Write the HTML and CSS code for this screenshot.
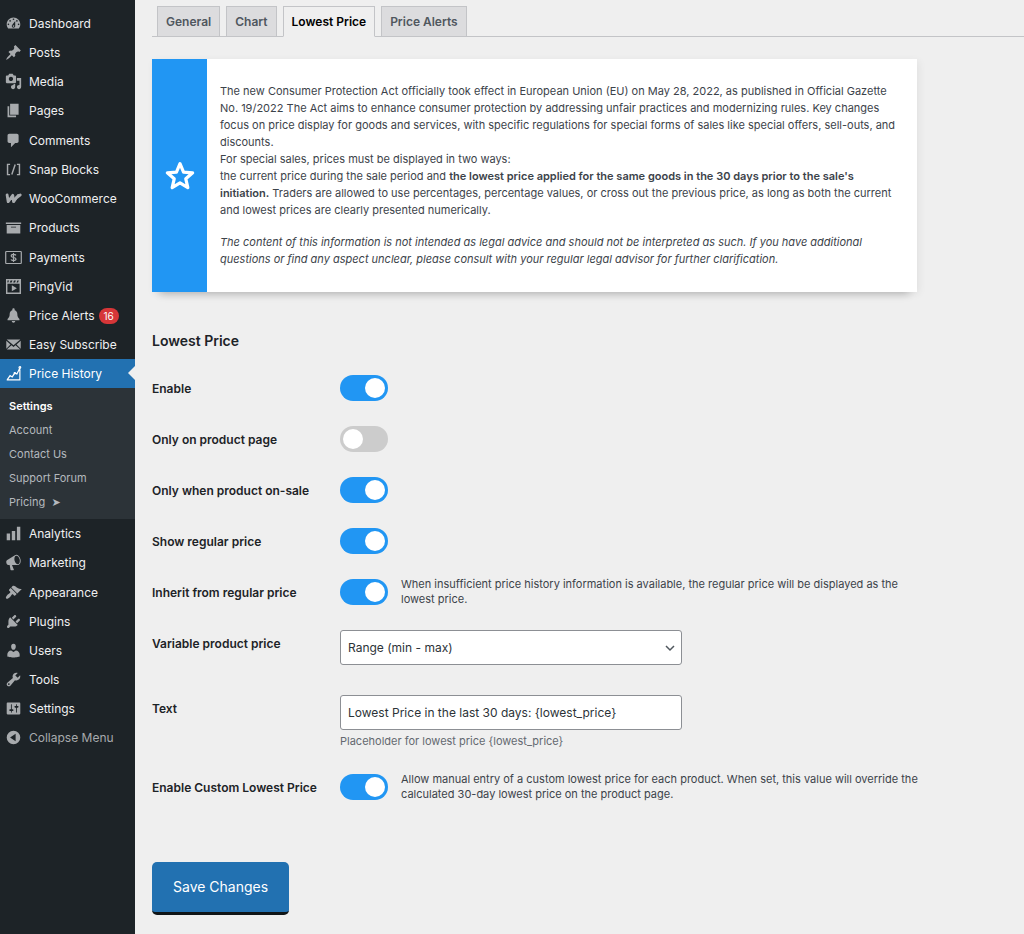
FILE: index.html
```html
<!DOCTYPE html>
<html lang="en">
<head>
  <meta charset="UTF-8">
  <meta name="viewport" content="width=device-width, initial-scale=1.0">
  <title>Price History - Lowest Price</title>
  <link rel="stylesheet" href="styles.css">
</head>
<body>
  <div class="layout">
    <nav class="sidebar" aria-label="Main menu">
      <ul class="menu">
        <li><a href="#"><svg class="icon" viewBox="0 0 20 20"><path fill-rule="evenodd" d="M3.76 16h12.48c1.1-1.37 1.76-3.11 1.76-5 0-4.42-3.58-8-8-8s-8 3.58-8 8c0 1.89.66 3.63 1.76 5zM10 4c.55 0 1 .45 1 1s-.45 1-1 1-1-.45-1-1 .45-1 1-1zM6 6c.55 0 1 .45 1 1s-.45 1-1 1-1-.45-1-1 .45-1 1-1zm8 0c.55 0 1 .45 1 1s-.45 1-1 1-1-.45-1-1 .45-1 1-1zm-5.37 5.55L12 7v6c0 1.1-.9 2-2 2s-2-.9-2-2c0-.57.24-1.08.63-1.45zM4 10c.55 0 1 .45 1 1s-.45 1-1 1-1-.45-1-1 .45-1 1-1zm12 0c.55 0 1 .45 1 1s-.45 1-1 1-1-.45-1-1 .45-1 1-1zm-5 3c0-.55-.45-1-1-1s-1 .45-1 1 .45 1 1 1 1-.45 1-1z"/></svg>Dashboard</a></li>
        <li><a href="#"><svg class="icon" viewBox="0 0 20 20"><path d="M10.44 3.02l1.82-1.82 6.36 6.35-1.83 1.82c-1.05-.68-2.48-.57-3.41.36l-.75.75c-.92.93-1.04 2.35-.35 3.41l-1.83 1.82-2.41-2.41-2.8 2.79c-.42.42-3.38 2.71-3.8 2.29s1.86-3.39 2.28-3.81l2.79-2.79L4.1 9.36l1.83-1.82c1.05.69 2.48.57 3.4-.36l.75-.75c.93-.92 1.05-2.35.36-3.41z"/></svg>Posts</a></li>
        <li><a href="#"><svg class="icon" viewBox="0 0 20 20"><path fill-rule="evenodd" d="M13 11V4c0-.55-.45-1-1-1h-1.67L9 1H5L3.67 3H2c-.55 0-1 .45-1 1v7c0 .55.45 1 1 1h10c.55 0 1-.45 1-1zM7 4.5c1.38 0 2.5 1.12 2.5 2.5S8.38 9.5 7 9.5 4.5 8.38 4.5 7 5.62 4.5 7 4.5zM14 6h5v10.5c0 1.38-1.12 2.5-2.5 2.5S14 17.88 14 16.5s1.12-2.5 2.5-2.5c.17 0 .34.02.5.05V9h-3V6zm-4 8.05V13h2v3.5c0 1.38-1.12 2.5-2.5 2.5S7 17.88 7 16.5 8.12 14 9.5 14c.17 0 .34.02.5.05z"/></svg>Media</a></li>
        <li><a href="#"><svg class="icon" viewBox="0 0 20 20"><path d="M6 15V2h10v13H6zm-1 1h8v2H3V5h2v11z"/></svg>Pages</a></li>
      </ul>
      <ul class="menu">
        <li><a href="#"><svg class="icon" viewBox="0 0 20 20"><path d="M5 2h9c1.1 0 2 .9 2 2v7c0 1.1-.9 2-2 2h-2l-5 5v-5H5c-1.1 0-2-.9-2-2V4c0-1.1.9-2 2-2z"/></svg>Comments</a></li>
        <li><a href="#"><svg class="icon icon-line" viewBox="0 0 20 20"><path d="M6 4H3v12h3M14 4h3v12h-3M12 4L8 16"/></svg>Snap Blocks</a></li>
        <li><a href="#"><svg class="icon" viewBox="0 0 24 20"><path fill="none" stroke="currentColor" stroke-width="4" stroke-linejoin="round" stroke-linecap="round" d="M3 5l1.500 9.500L11 5.500l1 9C14 11 17 7.500 21.500 5"/><path d="M13 16l8.500-12-3.500-.5-6 7z"/></svg>WooCommerce</a></li>
        <li><a href="#"><svg class="icon" viewBox="0 0 20 20"><path fill-rule="evenodd" d="M19 4v2H1V4h18zM2 7h16v10H2V7zm11 3V9H7v1h6z"/></svg>Products</a></li>
      </ul>
      <ul class="menu">
        <li><a href="#"><svg class="icon icon-line" viewBox="0 0 24 20"><rect x="1" y="1.500" width="22" height="17" rx="1"/><path d="M15.500 7c-.6-1-1.800-1.300-3.500-1.300-2 0-3.300.7-3.300 2.100 0 3.200 6.800 1.200 6.800 4.400 0 1.400-1.500 2.100-3.500 2.100-1.800 0-3-.5-3.600-1.500M12 3.500v13"/></svg>Payments</a></li>
        <li><a href="#"><svg class="icon icon-line" viewBox="0 0 20 20"><path d="M2 2h16v16H2zM2 6h16M6 2L4.500 6M10 2L8.500 6M14 2l-1.500 4M17.500 2L16 6"/><path fill="currentColor" stroke="none" d="M8 8.500v7l6-3.500z"/></svg>PingVid</a></li>
        <li><a href="#"><svg class="icon" viewBox="0 0 20 20"><path d="M10 1.500c.8 0 1.400.6 1.400 1.400v.8c2 .6 3.100 2.300 3.100 4.600 0 3.200 1 4.600 2.500 5.700V15.500H3V14c1.500-1.100 2.500-2.500 2.500-5.700 0-2.300 1.100-4 3.100-4.600v-.8c0-.8.6-1.400 1.400-1.400zM8 16.500h4c0 1.200-.9 2-2 2s-2-.8-2-2z"/></svg>Price Alerts <span class="badge">16</span></a></li>
        <li><a href="#"><svg class="icon" viewBox="0 0 20 20"><path d="M2 4h16l-8 7zM1.500 5.500L6.500 10l-5 5zM18.500 5.500L13.500 10l5 5zM7.600 11L10 13l2.400-2 5.600 5H2z"/></svg>Easy Subscribe</a></li>
        <li class="current">
          <a href="#" aria-current="page"><svg class="icon icon-line" viewBox="0 0 20 20"><path d="M2 17.500h15.500V5M2.500 17.500L6 12.500l2.500 1.500 3-4.500 2.500 1 3.500-7"/><circle cx="17.500" cy="3" r="1"/><circle cx="11.500" cy="9.500" r=".7"/></svg>Price History</a>
          <ul class="submenu">
            <li><a href="#" class="selected">Settings</a></li>
            <li><a href="#">Account</a></li>
            <li><a href="#">Contact Us</a></li>
            <li><a href="#">Support Forum</a></li>
            <li><a href="#">Pricing&nbsp; <span class="arrow">➤</span></a></li>
          </ul>
        </li>
        <li><a href="#"><svg class="icon" viewBox="0 0 20 20"><path d="M18 18V2h-4v16h4zm-6 0V7H8v11h4zm-6 0v-8H2v8h4z"/></svg>Analytics</a></li>
        <li><a href="#"><svg class="icon" viewBox="0 0 20 20"><path fill-rule="evenodd" d="M18.150 5.940c.46 1.620.38 3.220-.02 4.480-.42 1.280-1.260 2.180-2.300 2.480-.16.060-.26.060-.4.060-.06.020-.12.020-.18.020-.06.020-.14.020-.22.020h-6.800l2.220 5.500c.02.140-.06.260-.14.340-.08.100-.24.160-.34.160H6.950c-.1 0-.26-.06-.34-.16-.08-.08-.16-.2-.14-.34l-1-5.500H4.250l-.02-.02c-.5.060-1.080-.18-1.540-.62s-.88-1.080-1.060-1.880c-.24-.8-.2-1.560-.02-2.200.18-.62.58-1.080 1.060-1.300l.02-.02 9-5.400c.1-.06.180-.1.240-.16.060-.04.140-.08.240-.12.160-.08.280-.12.500-.18 1.040-.3 2.240.1 3.220.98s1.840 2.240 2.260 3.860zm-2.580 5.980h-.02c.4-.1.740-.34 1.040-.7.580-.7.860-1.760.860-3.040 0-.64-.1-1.300-.28-1.980-.34-1.360-1.020-2.500-1.780-3.240s-1.680-1.100-2.460-.88c-.82.220-1.400.96-1.700 2-.32 1.040-.28 2.360.06 3.720.38 1.360 1 2.500 1.800 3.240.78.740 1.620 1.100 2.480.88z"/></svg>Marketing</a></li>
      </ul>
      <ul class="menu">
        <li><a href="#"><svg class="icon" viewBox="0 0 20 20"><path d="M14.480 11.060L7.410 3.990l1.500-1.500c.5-.56 2.300-.47 3.510.32 1.210.8 1.430 1.280 2.910 2.100 1.180.64 2.450 1.260 4.450.85zm-.71.710L6.700 4.700 4.930 6.470c-.39.39-.39 1.020 0 1.410l1.060 1.060c.39.39.39 1.030 0 1.420-.6.600-1.430 1.110-2.210 1.690-.35.260-.7.530-1.010.84C1.430 14.230.4 16.080 1.400 17.070c.99 1 2.840-.03 4.180-1.360.31-.31.58-.66.85-1.020.57-.78 1.080-1.610 1.690-2.210.39-.39 1.020-.39 1.410 0l1.060 1.060c.39.39 1.020.39 1.410 0z"/></svg>Appearance</a></li>
        <li><a href="#"><svg class="icon" viewBox="0 0 20 20"><path d="M13.110 4.360L9.870 7.600 8 5.730l3.240-3.240c.35-.34 1.050-.2 1.560.32.52.51.66 1.210.31 1.550zm-8 1.770l.91-1.120 9.010 9.010-1.190.84c-.71.71-2.630 1.160-3.820 1.160H6.140L4.900 17.260c-.59.59-1.540.59-2.120 0-.59-.58-.59-1.530 0-2.120l1.240-1.240v-3.880c0-1.130.4-3.190 1.090-3.890zm7.260 3.970l3.240-3.240c.34-.35 1.040-.21 1.550.31.52.51.66 1.210.31 1.550l-3.240 3.250z"/></svg>Plugins</a></li>
        <li><a href="#"><svg class="icon" viewBox="0 0 20 20"><path d="M10 9.250c-2.270 0-2.730-3.440-2.730-3.440C7 4.020 7.820 2 9.970 2c2.160 0 2.980 2.020 2.710 3.810 0 0-.41 3.440-2.680 3.440zm0 2.570L12.720 10c2.390 0 4.520 2.330 4.520 4.530v2.490s-3.650 1.130-7.240 1.130c-3.650 0-7.240-1.130-7.240-1.130v-2.490c0-2.250 1.940-4.480 4.470-4.480z"/></svg>Users</a></li>
        <li><a href="#"><svg class="icon" viewBox="0 0 20 20"><path fill-rule="evenodd" d="M16.680 9.770c-1.340 1.340-3.300 1.670-4.950.99l-5.410 6.520c-.99.99-2.590.99-3.580 0s-.99-2.590 0-3.570l6.520-5.420c-.68-1.650-.35-3.610.99-4.950 1.280-1.280 3.120-1.620 4.720-1.060l-2.890 2.890 2.820 2.820 2.860-2.870c.53 1.580.18 3.390-1.080 4.650zM3.810 16.210c.4.390 1.040.390 1.430 0 .4-.4.4-1.040 0-1.430-.39-.4-1.030-.4-1.430 0-.39.39-.39 1.030 0 1.430z"/></svg>Tools</a></li>
        <li><a href="#"><svg class="icon" viewBox="0 0 20 20"><path fill-rule="evenodd" d="M18 16V4c0-.55-.45-1-1-1H3c-.55 0-1 .45-1 1v12c0 .55.45 1 1 1h14c.55 0 1-.45 1-1zM8 11h1c.55 0 1 .45 1 1s-.45 1-1 1H8v1.500c0 .28-.22.5-.5.5s-.5-.22-.5-.5V13H6c-.55 0-1-.45-1-1s.45-1 1-1h1V5.500c0-.28.22-.5.5-.5s.5.220.5.500V11zm5-2h-1c-.55 0-1-.45-1-1s.45-1 1-1h1V5.500c0-.28.22-.5.5-.5s.5.220.5.500V7h1c.55 0 1 .45 1 1s-.45 1-1 1h-1v5.500c0 .28-.22.5-.5.5s-.5-.22-.5-.5V9z"/></svg>Settings</a></li>
        <li><button type="button" class="collapse"><svg class="icon" viewBox="0 0 20 20"><path fill-rule="evenodd" d="M10 2a8 8 0 1 0 0 16 8 8 0 0 0 0-16zm2.500 3.500v9L6 10z"/></svg>Collapse Menu</button></li>
      </ul>
    </nav>

    <main class="content">
      <nav class="tabs" aria-label="Settings sections">
        <a href="#" class="tab">General</a>
        <a href="#" class="tab">Chart</a>
        <a href="#" class="tab tab-active">Lowest Price</a>
        <a href="#" class="tab">Price Alerts</a>
      </nav>

      <section class="notice">
        <div class="notice-side">
          <svg class="star" viewBox="0 0 28 28"><path d="M14 2.500l3.300 7.800 8.500.7-6.400 5.600 1.900 8.200-7.300-4.400-7.300 4.400 1.900-8.200L2.200 11l8.500-.7z"/></svg>
        </div>
        <div class="notice-text">
          <p>The new Consumer Protection Act officially took effect in European Union (EU) on May 28, 2022, as published in Official Gazette No. 19/2022 The Act aims to enhance consumer protection by addressing unfair practices and modernizing rules. Key changes focus on price display for goods and services, with specific regulations for special forms of sales like special offers, sell-outs, and discounts.<br>
          For special sales, prices must be displayed in two ways:<br>
          the current price during the sale period and <strong>the lowest price applied for the same goods in the 30 days prior to the sale's initiation.</strong> Traders are allowed to use percentages, percentage values, or cross out the previous price, as long as both the current and lowest prices are clearly presented numerically.</p>
          <p><em>The content of this information is not intended as legal advice and should not be interpreted as such. If you have additional questions or find any aspect unclear, please consult with your regular legal advisor for further clarification.</em></p>
        </div>
      </section>

      <form class="settings">
        <h2>Lowest Price</h2>

        <div class="row">
          <label for="enable">Enable</label>
          <input type="checkbox" class="switch" id="enable" checked>
        </div>
        <div class="row">
          <label for="only-page">Only on product page</label>
          <input type="checkbox" class="switch" id="only-page">
        </div>
        <div class="row">
          <label for="only-sale">Only when product on-sale</label>
          <input type="checkbox" class="switch" id="only-sale" checked>
        </div>
        <div class="row">
          <label for="show-regular">Show regular price</label>
          <input type="checkbox" class="switch" id="show-regular" checked>
        </div>
        <div class="row">
          <label for="inherit">Inherit from regular price</label>
          <div class="field">
            <input type="checkbox" class="switch" id="inherit" checked>
            <p>When insufficient price history information is available, the regular price will be displayed as the lowest price.</p>
          </div>
        </div>
        <div class="row row-input">
          <label for="variable">Variable product price</label>
          <div class="select-wrap">
            <select id="variable" class="control">
              <option>Range (min - max)</option>
            </select>
            <svg class="chevron" viewBox="0 0 10 10"><path d="M1 3l4 4 4-4"/></svg>
          </div>
        </div>
        <div class="row row-input">
          <label for="text">Text</label>
          <div>
            <input type="text" id="text" class="control" value="Lowest Price in the last 30 days: {lowest_price}">
            <p class="hint">Placeholder for lowest price {lowest_price}</p>
          </div>
        </div>
        <div class="row">
          <label for="custom">Enable Custom Lowest Price</label>
          <div class="field">
            <input type="checkbox" class="switch" id="custom" checked>
            <p>Allow manual entry of a custom lowest price for each product. When set, this value will override the calculated 30-day lowest price on the product page.</p>
          </div>
        </div>

        <button type="submit" class="save">Save Changes</button>
      </form>
    </main>
  </div>
</body>
</html>
```
FILE: styles.css
```css
* {
  box-sizing: border-box;
}
body {
  margin: 0;
  background: #efefef;
  color: #3c434a;
  font-family: Inter, "Liberation Sans", sans-serif;
  font-size: 12px;
}
ul {
  list-style: none;
  margin: 0;
  padding: 0;
}
p {
  margin: 0;
}
a {
  text-decoration: none;
}
.layout {
  display: flex;
  min-height: 100vh;
}

/* sidebar */
.sidebar {
  flex: 0 0 135px;
  display: flex;
  flex-direction: column;
  gap: 1px;
  padding-top: 9px;
  background: #1d2327;
}
.menu > li > a,
.collapse {
  display: flex;
  align-items: center;
  gap: 7px;
  width: 100%;
  height: 29px;
  padding: 0 0 0 5px;
  border: none;
  background: none;
  color: #f0f0f1;
  font: inherit;
  cursor: pointer;
}
.collapse {
  color: #a7aaad;
}
.icon {
  flex: none;
  width: 17px;
  height: 17px;
  color: #a7aaad;
  fill: currentColor;
}
.icon-line {
  fill: none;
  stroke: currentColor;
  stroke-width: 1.7;
}
.badge {
  min-width: 20px;
  margin-left: -3px;
  border-radius: 8px;
  background: #d63638;
  color: #fff;
  font-size: 10px;
  line-height: 16px;
  text-align: center;
}
.menu > .current > a {
  position: relative;
  background: #2271b1;
  color: #fff;
}
.menu > .current > a::after {
  content: "";
  position: absolute;
  right: 0;
  top: 7px;
  border: 7px solid transparent;
  border-left: none;
  border-right-color: #efefef;
}
.current .icon {
  color: #fff;
  stroke-width: 1.4;
}
.submenu {
  padding: 6px 0 4px;
  background: #2c3338;
}
.submenu a {
  display: block;
  padding-left: 9px;
  color: #b4b9be;
  font-size: 11px;
  line-height: 24px;
}
.submenu .selected {
  color: #fff;
  font-weight: 600;
}
.arrow {
  font-family: "DejaVu Sans", sans-serif;
  font-size: 11px;
}

/* content */
.content {
  flex: 1;
  min-width: 0;
  padding: 6px 0 19px 17px;
}
.tabs {
  display: flex;
  gap: 6px;
  padding-left: 5px;
  border-bottom: 1px solid #c3c4c7;
}
.tab {
  margin-bottom: -1px;
  padding: 0 8px;
  border: 1px solid #c3c4c7;
  background: #dcdcde;
  color: #50575e;
  font-weight: 600;
  line-height: 29px;
}
.tab-active {
  border-bottom-color: #efefef;
  background: #efefef;
  color: #000;
}
.notice {
  display: flex;
  max-width: 765px;
  margin-top: 22px;
  background: #fff;
  box-shadow: 0 10px 8px -8px rgba(0, 0, 0, 0.22), 2px 2px 8px rgba(0, 0, 0, 0.06);
}
.notice-side {
  flex: 0 0 55px;
  display: flex;
  align-items: center;
  justify-content: center;
  background: #2196f3;
}
.star {
  width: 30px;
  height: 30px;
  fill: none;
  stroke: #fff;
  stroke-width: 3;
  stroke-linejoin: round;
}
.notice-text {
  flex: 1;
  padding: 24px 18px 24px 13px;
  font-size: 11px;
  line-height: 17px;
}
.notice-text p + p {
  margin-top: 15px;
}
.notice-text strong {
  font-weight: 600;
}
.settings {
  max-width: 775px;
}
h2 {
  margin: 39px 0 24px;
  color: #1d2327;
  font-size: 14px;
  font-weight: 600;
  line-height: 20px;
}
.row {
  display: grid;
  grid-template-columns: 188px 1fr;
  align-items: center;
  margin-bottom: 25px;
}
.row label {
  color: #1d2327;
  font-weight: 600;
}
.row-input {
  align-items: start;
}
.row-input + .row-input {
  margin-top: 30px;
}
.row-input label {
  padding-top: 6px;
}
.field {
  display: flex;
  align-items: center;
  gap: 13px;
  height: 26px;
}
.field p {
  font-size: 11px;
  line-height: 15px;
}
.switch {
  appearance: none;
  flex: none;
  width: 48px;
  height: 26px;
  margin: 0;
  padding: 3px;
  border-radius: 13px;
  background: #ccc;
  cursor: pointer;
}
.switch::before {
  content: "";
  display: block;
  width: 20px;
  height: 20px;
  border-radius: 50%;
  background: #fff;
}
.switch:checked {
  background: #2196f3;
}
.switch:checked::before {
  margin-left: auto;
}
.control {
  appearance: none;
  display: block;
  width: 100%;
  max-width: 342px;
  height: 35px;
  padding: 0 7px;
  border: 1px solid #8c8f94;
  border-radius: 3px;
  background: #fff;
  color: #2c3338;
  font: inherit;
}
.select-wrap {
  position: relative;
  max-width: 342px;
}
.chevron {
  position: absolute;
  right: 7px;
  top: 13px;
  width: 10px;
  height: 10px;
  fill: none;
  stroke: #50575e;
  stroke-width: 1.5;
  pointer-events: none;
}
.hint {
  margin-top: 3px;
  color: #646970;
  font-size: 11px;
  line-height: 16px;
}
.save {
  margin-top: 37px;
  padding: 0 21px;
  border: none;
  border-bottom: 3px solid #101517;
  border-radius: 5px;
  background: #2271b1;
  color: #fff;
  font: inherit;
  font-size: 14px;
  line-height: 50px;
  cursor: pointer;
}
```
